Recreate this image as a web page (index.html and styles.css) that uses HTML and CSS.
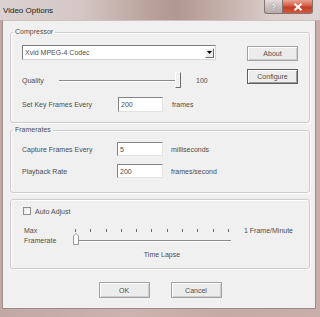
FILE: index.html
```html
<!DOCTYPE html>
<html lang="en">
<head>
	<meta charset="UTF-8">
	<title>Video Options</title>
	<link rel="stylesheet" href="styles.css">
</head>
<body>
<div class="window">
	<div class="titlebar">
		<span class="title">Video Options</span>
		<div class="caption-btns">
			<span class="cap help">?</span>
			<span class="cap close">
				<svg width="10" height="8" viewBox="0 0 10 8"><path d="M1.5 0.8 L8.5 7.2 M8.5 0.8 L1.5 7.2" stroke="#fff" stroke-width="2"/></svg>
			</span>
		</div>
	</div>
	<div class="client">
		<fieldset class="group compressor">
			<legend>Compressor</legend>
			<div class="col-main">
				<div class="combo">
					<span>Xvid MPEG-4 Codec</span>
					<span class="combo-arrow"><svg width="5" height="3" viewBox="0 0 5 3"><path d="M0 0 H5 L2.5 3 Z" fill="#000"/></svg></span>
				</div>
				<div class="row quality">
					<span class="lbl-q">Quality</span>
					<div class="hslider">
						<span class="track"></span>
						<span class="thumb"></span>
					</div>
					<span class="val">100</span>
				</div>
				<div class="row keyrow">
					<span class="lbl-k">Set Key Frames Every</span>
					<span class="edit">200</span>
					<span class="unit">frames</span>
				</div>
			</div>
			<div class="col-btns">
				<button class="btn">About</button>
				<button class="btn default">Configure</button>
			</div>
		</fieldset>

		<fieldset class="group framerates">
			<legend>Framerates</legend>
			<div class="frow">
				<span class="lbl-f">Capture Frames Every</span>
				<span class="edit">5</span>
				<span class="unit">milliseconds</span>
			</div>
			<div class="frow">
				<span class="lbl-f">Playback Rate</span>
				<span class="edit">200</span>
				<span class="unit">frames/second</span>
			</div>
		</fieldset>

		<fieldset class="group lapse">
			<div class="check-row">
				<span class="checkbox"></span>
				<span class="check-lbl">Auto Adjust</span>
			</div>
			<div class="lapse-row">
				<span class="lapse-lbl">Max<br>Framerate</span>
				<div class="tslider">
					<div class="ticks">
						<i></i><i></i><i></i><i></i><i></i><i></i><i></i><i></i><i></i><i></i><i></i>
					</div>
					<span class="ttrack"></span>
					<svg class="tthumb" width="6" height="12" viewBox="0 0 6 12"><path d="M0.5 11.5 V3 L3 0.5 L5.5 3 V11.5 Z" fill="#fbfbfb" stroke="#9a9a9a"/></svg>
				</div>
				<span class="lapse-end">1 Frame/Minute</span>
			</div>
			<div class="lapse-caption">Time Lapse</div>
		</fieldset>

		<div class="actions">
			<button class="btn act">OK</button>
			<button class="btn act">Cancel</button>
		</div>
	</div>
</div>
</body>
</html>
```

FILE: styles.css
```css
*{
	margin: 0;
	padding: 0;
	box-sizing: border-box;
}
body{
	margin: 0;
	font-family: "Liberation Sans", Arial, sans-serif;
	font-size: 7px;
	color: #4e4e4e;
}
.window{
	width: 320px;
	height: 317px;
	display: flex;
	flex-direction: column;
	background: linear-gradient(90deg, #c2a8a4, #cdb3af 40%, #c6aaa5 70%, #c9aeaa);
}
.titlebar{
	height: 20px;
	display: flex;
	align-items: flex-start;
	padding: 0 7px 0 3px;
	background: linear-gradient(90deg, #dcd2d1 0%, #d4c7c5 25%, #bca59e 45%, #b19890 55%, #c5b0aa 70%, #dacdcb 85%, #e0d5d4 100%);
}
.title{
	font-size: 8px;
	line-height: 21px;
	color: #1c1c1c;
}
.caption-btns{
	margin-left: auto;
	display: flex;
}
.cap{
	height: 14px;
	display: flex;
	align-items: center;
	justify-content: center;
	border: 1px solid #857571;
	border-top: none;
}
.help{
	width: 19px;
	border-radius: 0 0 0 3px;
	background: linear-gradient(#e3dcdb, #c9bfbd 50%, #b6aba8);
	color: #f4f4f4;
	font-size: 9px;
	font-weight: bold;
	text-shadow: 0 0 1px #555;
}
.close{
	width: 30px;
	border-left: none;
	border-radius: 0 0 3px 0;
	background: linear-gradient(#e9a493, #d65a42 45%, #c23e25 55%, #cf5a40);
}
.client{
	flex: 1;
	margin: 0 4px 8px 2px;
	background: #f0f0f0;
	border: 1px solid #9e8c89;
	border-top-color: #cfc3c1;
	padding: 0 5px 0 7px;
	display: flex;
	flex-direction: column;
}
.group{
	border: 1px solid #cdcdcd;
	border-radius: 3px;
	box-shadow: inset 1px 1px 0 #fff, 1px 1px 0 #fff;
	padding: 0 11px;
}
.group legend{
	margin-left: -9px;
	padding: 0 2px;
	line-height: 10px;
	font-size: 7px;
}
.compressor{
	margin-top: 6px;
	padding-top: 8px;
	padding-bottom: 10px;
	display: grid;
	grid-template-columns: 1fr 51px;
}
.combo{
	width: 194px;
	height: 15px;
	background: #fff;
	border: 1px solid;
	border-color: #7c7c7c #d6d6d6 #d6d6d6 #7c7c7c;
	display: flex;
	align-items: center;
	padding-left: 2px;
	margin-bottom: 12px;
}
.combo-arrow{
	margin-left: auto;
	margin-right: 1px;
	width: 9px;
	height: 10px;
	border: 1px solid;
	border-color: #fff #6d6d6d #6d6d6d #fff;
	background: #ececec;
	display: flex;
	align-items: center;
	justify-content: center;
}
.row{
	display: flex;
	align-items: center;
}
.quality{
	height: 16px;
	margin-bottom: 9px;
}
.lbl-q{
	width: 37px;
}
.hslider{
	width: 122px;
	height: 16px;
	position: relative;
}
.track{
	position: absolute;
	left: 0;
	right: 6px;
	top: 8px;
	height: 2px;
	border-top: 1px solid #8c8c8c;
	border-bottom: 1px solid #fff;
}
.thumb{
	position: absolute;
	right: 0;
	top: 0;
	width: 6px;
	height: 16px;
	background: #f0f0f0;
	border: 1px solid;
	border-color: #fff #6f6f6f #6f6f6f #fff;
}
.val{
	margin-left: 15px;
}
.keyrow{
	height: 15px;
}
.lbl-k{
	width: 96px;
}
.edit{
	width: 45px;
	height: 15px;
	background: #fff;
	border: 1px solid;
	border-color: #848484 #e2e2e2 #e2e2e2 #848484;
	padding-left: 2px;
	display: flex;
	align-items: center;
}
.unit{
	margin-left: 9px;
}
.col-btns{
	display: flex;
	flex-direction: column;
	gap: 8px;
	padding-top: 1px;
}
.btn{
	width: 51px;
	height: 15px;
	font-family: inherit;
	font-size: 7px;
	color: #4e4e4e;
	background: #ececec;
	border: 1px solid #a2a2a2;
	box-shadow: inset 1px 1px 0 #fff, inset -1px -1px 0 #cdcdcd;
}
.btn.default{
	border-color: #5e5e5e;
	box-shadow: inset 1px 1px 0 #fff, inset -1px -1px 0 #9c9c9c;
}
.framerates{
	margin-top: 2px;
	padding-top: 7px;
	padding-bottom: 14px;
	display: flex;
	flex-direction: column;
	gap: 8px;
}
.frow{
	height: 14px;
	display: flex;
	align-items: center;
}
.frow .edit{
	width: 46px;
	height: 14px;
}
.lbl-f{
	width: 95px;
}
.frow .unit{
	margin-left: 8px;
}
.lapse{
	margin-top: 6px;
	padding: 7px 11px 8px 12px;
}
.check-row{
	height: 8px;
	display: flex;
	align-items: center;
}
.checkbox{
	width: 8px;
	height: 8px;
	border: 1px solid #8e8f8f;
	background: linear-gradient(135deg, #e8e8e8, #fff);
}
.check-lbl{
	margin-left: 4px;
}
.lapse-row{
	margin-top: 11px;
	display: flex;
	align-items: flex-start;
}
.lapse-lbl{
	width: 50px;
	line-height: 10px;
	padding-left: 1px;
}
.tslider{
	width: 162px;
	height: 20px;
	position: relative;
}
.ticks{
	display: flex;
	justify-content: space-between;
	margin: 3px 6px 0 2px;
	height: 3px;
}
.ticks i{
	width: 1px;
	height: 3px;
	background: #6a6a6a;
}
.ttrack{
	display: block;
	margin: 8px 4px 0 4px;
	height: 2px;
	border-top: 1px solid #8c8c8c;
	border-bottom: 1px solid #fff;
}
.tthumb{
	position: absolute;
	left: 0;
	top: 7px;
}
.lapse-end{
	margin-left: 9px;
	line-height: 10px;
}
.lapse-caption{
	margin-top: 4px;
	line-height: 10px;
	text-align: center;
	padding-left: 3px;
}
.actions{
	margin-top: 13px;
	display: flex;
	justify-content: center;
	gap: 21px;
}
.btn.act{
	height: 16px;
}
```
